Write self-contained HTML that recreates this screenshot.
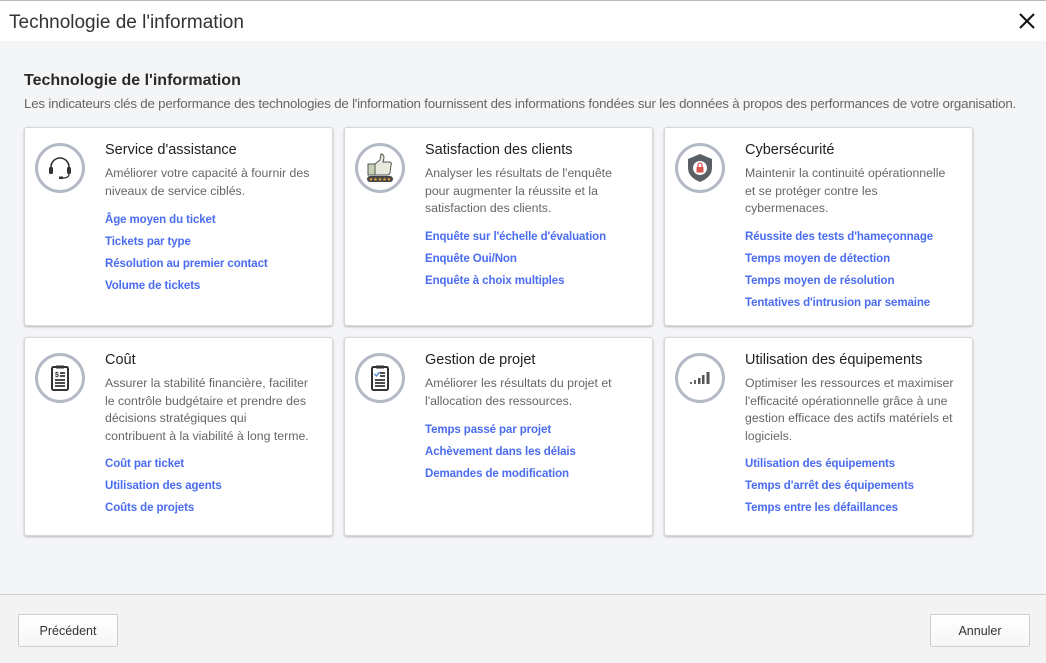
<!DOCTYPE html>
<html><head><meta charset="utf-8"><style>
*{margin:0;padding:0;box-sizing:border-box}
body{width:1046px;height:663px;overflow:hidden;font-family:"Liberation Sans",sans-serif;background:#f4f5f7;position:relative;color:#222}
.hdr{position:absolute;left:0;top:0;width:1046px;height:41px;background:#fff;border-top:1px solid #b8b8b8}
.hdr h1{position:absolute;left:9px;top:11px;font-size:19px;font-weight:normal;color:#333}
.x{position:absolute;right:10px;top:11px}
.t2{position:absolute;left:24px;top:72px;font-size:16px;font-weight:bold;color:#2a2a2a}
.sub{position:absolute;left:24px;top:96px;font-size:13.3px;color:#666;white-space:nowrap;letter-spacing:-0.2px}
.card{position:absolute;width:309px;height:199px;background:#fff;border:1px solid #d5d8dc;border-radius:3px;box-shadow:0 1px 2px rgba(0,0,0,.25)}
.ic{position:absolute;left:10px;top:15px;width:50px;height:50px;border:3px solid #b3bac6;border-radius:50%;display:flex;align-items:center;justify-content:center}
.card h3{position:absolute;left:80px;top:14px;font-size:14.5px;font-weight:normal;color:#222;white-space:nowrap}
.d{position:absolute;left:80px;top:37px;font-size:12.3px;line-height:17.5px;color:#666;white-space:nowrap}
.l{font-size:11.5px;color:#4a6cf0;font-weight:bold;line-height:22px;white-space:nowrap;letter-spacing:-0.1px}
.ft{position:absolute;left:0;top:594px;width:1046px;height:69px;background:#f3f3f3;border-top:1px solid #d0d0d0}
.btn{position:absolute;top:19px;height:33px;border:1px solid #cfcfcf;border-radius:2px;background:linear-gradient(#fff,#f6f6f6);font-size:12.5px;color:#333;display:flex;align-items:center;justify-content:center}
</style></head><body>
<div class="hdr"><h1>Technologie de l'information</h1>
<svg class="x" width="18" height="18" viewBox="0 0 18 18"><path d="M2 2L16 16M16 2L2 16" stroke="#111" stroke-width="2"/></svg></div>
<div class="t2">Technologie de l'information</div>
<div class="sub">Les indicateurs clés de performance des technologies de l'information fournissent des informations fondées sur les données à propos des performances de votre organisation.</div>

<div class="card" style="left:24px;top:127px">
<div class="ic"><svg width="30" height="30" viewBox="0 0 30 30"><path d="M6 17V14a9 9 0 0 1 18 0v3" fill="none" stroke="#333" stroke-width="1.6"/><rect x="4" y="14" width="4" height="7" rx="1.5" fill="#333"/><rect x="22" y="14" width="4" height="7" rx="1.5" fill="#333"/><path d="M24 21q0 4-6 4" fill="none" stroke="#333" stroke-width="1.2"/><rect x="14" y="23.5" width="4" height="2.5" fill="#333"/></svg></div>
<h3>Service d'assistance</h3>
<div class="d">Améliorer votre capacité à fournir des<br>niveaux de service ciblés.</div>
<div style="position:absolute;left:80px;top:81px"><div class="l">Âge moyen du ticket</div><div class="l">Tickets par type</div><div class="l">Résolution au premier contact</div><div class="l">Volume de tickets</div></div>
</div>

<div class="card" style="left:344px;top:127px">
<div class="ic"><svg width="32" height="32" viewBox="0 0 32 32"><rect x="4" y="12" width="7" height="11" fill="#c8d2b8" stroke="#555"/><path d="M11 12l5-4 1-6q3 0 3 4l-1 4h7q2 1 1 3l-1 8q-1 2-3 2H11z" fill="#e7ebdd" stroke="#555"/><rect x="3" y="24" width="26" height="6" rx="3" fill="#444"/><text x="16" y="29" font-size="5" fill="#f0b040" text-anchor="middle">★★★★★</text></svg></div>
<h3>Satisfaction des clients</h3>
<div class="d">Analyser les résultats de l'enquête<br>pour augmenter la réussite et la<br>satisfaction des clients.</div>
<div style="position:absolute;left:80px;top:98px"><div class="l">Enquête sur l'échelle d'évaluation</div><div class="l">Enquête Oui/Non</div><div class="l">Enquête à choix multiples</div></div>
</div>

<div class="card" style="left:664px;top:127px">
<div class="ic"><svg width="32" height="32" viewBox="0 0 32 32"><path d="M16 2l12 5v9q0 9-12 14Q4 25 4 16V7z" fill="#5a5f66"/><circle cx="16" cy="16" r="7" fill="#fff"/><rect x="12.5" y="15" width="7" height="5.5" fill="#d9534f"/><path d="M14 15v-2a2 2 0 0 1 4 0v2" fill="none" stroke="#d9534f" stroke-width="1.3"/></svg></div>
<h3>Cybersécurité</h3>
<div class="d">Maintenir la continuité opérationnelle<br>et se protéger contre les<br>cybermenaces.</div>
<div style="position:absolute;left:80px;top:98px"><div class="l">Réussite des tests d'hameçonnage</div><div class="l">Temps moyen de détection</div><div class="l">Temps moyen de résolution</div><div class="l">Tentatives d'intrusion par semaine</div></div>
</div>

<div class="card" style="left:24px;top:337px">
<div class="ic"><svg width="30" height="30" viewBox="0 0 30 30"><rect x="7" y="4" width="16" height="23" rx="1.5" fill="#fff" stroke="#333" stroke-width="2"/><rect x="11" y="2.5" width="8" height="3" fill="#333"/><text x="12" y="14" font-size="7" font-weight="bold" fill="#333" text-anchor="middle">$</text><path d="M15 10h5M15 13h5M10 17h10M10 20h10M10 23h10" stroke="#333" stroke-width="1.8"/></svg></div>
<h3>Coût</h3>
<div class="d">Assurer la stabilité financière, faciliter<br>le contrôle budgétaire et prendre des<br>décisions stratégiques qui<br>contribuent à la viabilité à long terme.</div>
<div style="position:absolute;left:80px;top:115px"><div class="l">Coût par ticket</div><div class="l">Utilisation des agents</div><div class="l">Coûts de projets</div></div>
</div>

<div class="card" style="left:344px;top:337px">
<div class="ic"><svg width="30" height="30" viewBox="0 0 30 30"><rect x="7" y="4" width="16" height="23" rx="1.5" fill="#fff" stroke="#333" stroke-width="2"/><rect x="11" y="2.5" width="8" height="3" fill="#333"/><path d="M9.5 11l2 2 3-4" fill="none" stroke="#5a8fd0" stroke-width="1.5"/><path d="M15 10h5M15 13h5M10 17h10M10 20h10M10 23h10" stroke="#333" stroke-width="1.8"/></svg></div>
<h3>Gestion de projet</h3>
<div class="d">Améliorer les résultats du projet et<br>l'allocation des ressources.</div>
<div style="position:absolute;left:80px;top:81px"><div class="l">Temps passé par projet</div><div class="l">Achèvement dans les délais</div><div class="l">Demandes de modification</div></div>
</div>

<div class="card" style="left:664px;top:337px">
<div class="ic"><svg width="30" height="30" viewBox="0 0 30 30"><rect x="5" y="19" width="2" height="2" fill="#666"/><rect x="9" y="17" width="2" height="4" fill="#666"/><rect x="13" y="15" width="2.5" height="6" fill="#555"/><rect x="17" y="12" width="2.5" height="9" fill="#555"/><rect x="21.5" y="9" width="3" height="12" fill="#555"/></svg></div>
<h3>Utilisation des équipements</h3>
<div class="d">Optimiser les ressources et maximiser<br>l'efficacité opérationnelle grâce à une<br>gestion efficace des actifs matériels et<br>logiciels.</div>
<div style="position:absolute;left:80px;top:115px"><div class="l">Utilisation des équipements</div><div class="l">Temps d'arrêt des équipements</div><div class="l">Temps entre les défaillances</div></div>
</div>

<div class="ft">
<div class="btn" style="left:18px;width:100px">Précédent</div>
<div class="btn" style="left:930px;width:100px">Annuler</div>
</div>
</body></html>
